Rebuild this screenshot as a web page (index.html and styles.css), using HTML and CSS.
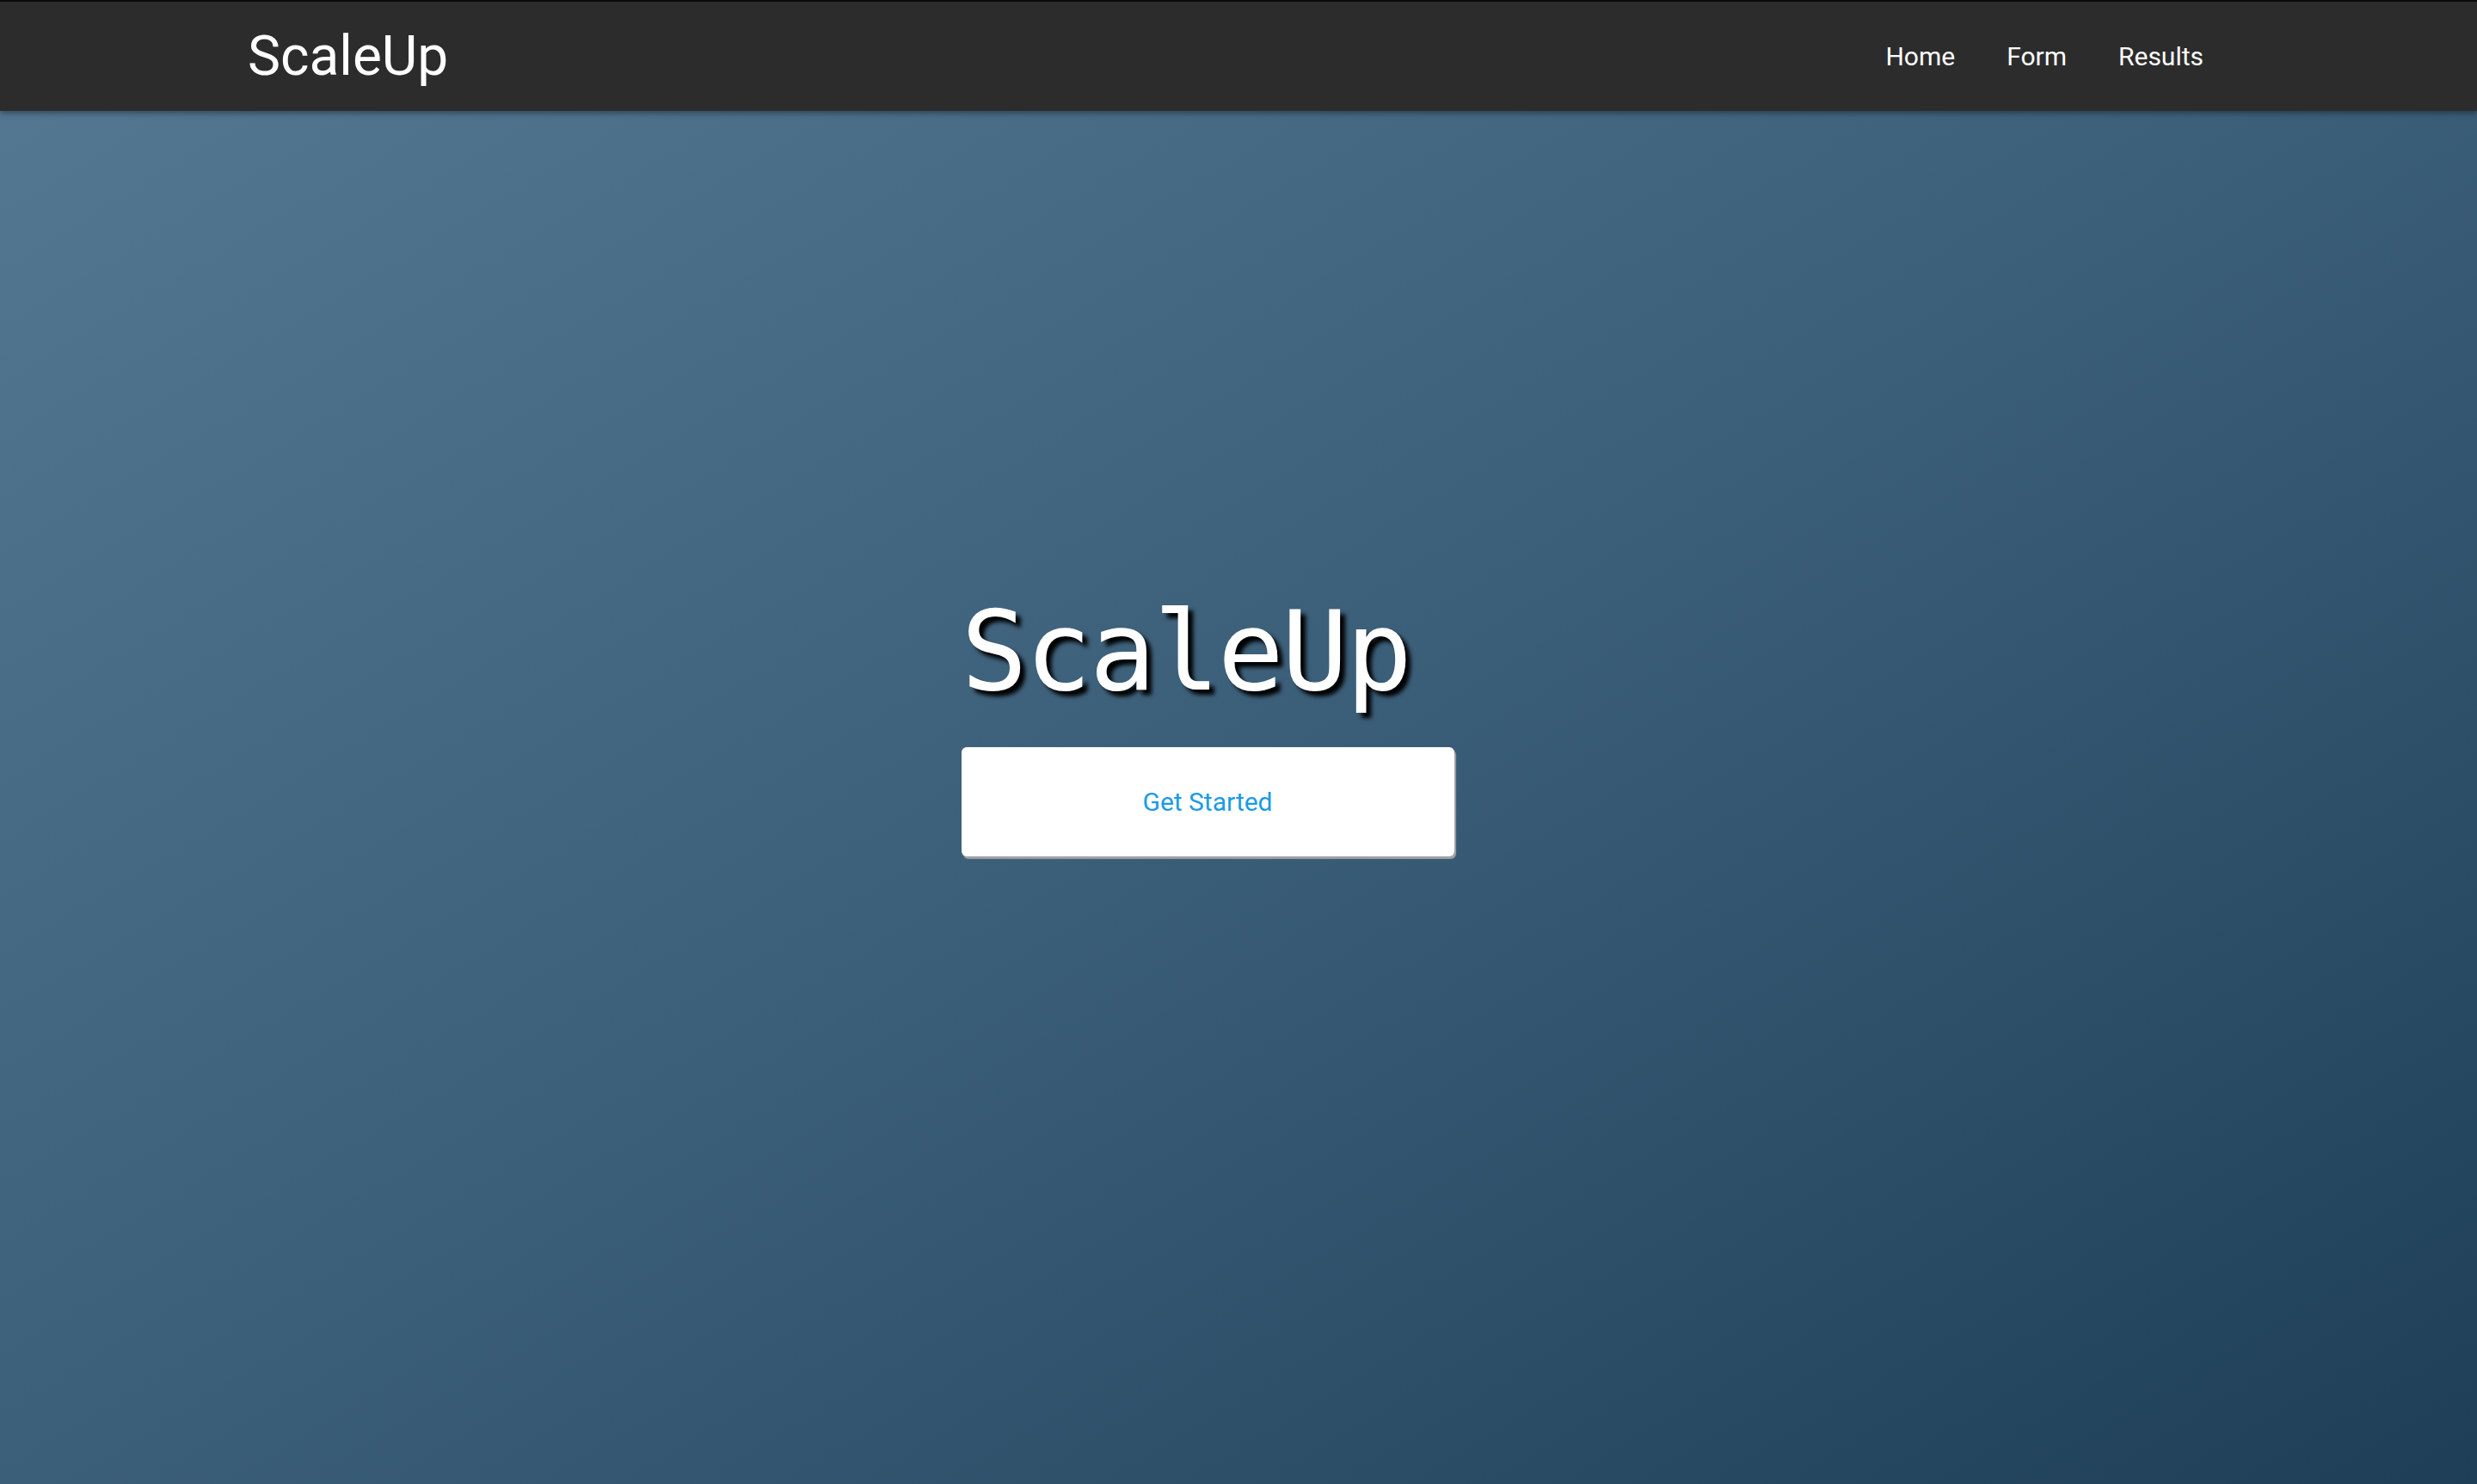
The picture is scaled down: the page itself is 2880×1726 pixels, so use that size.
FILE: index.html
```html
<!DOCTYPE html>
<html lang="en">
<head>
<meta charset="utf-8">
<title>ScaleUp</title>
<link rel="stylesheet" href="styles.css">
</head>
<body>
<header class="navbar">
  <div class="nav-inner">
    <a class="brand" href="#">ScaleUp</a>
    <nav class="nav-links">
      <a href="#">Home</a>
      <a href="#">Form</a>
      <a href="#">Results</a>
    </nav>
  </div>
</header>
<main class="hero">
  <div class="hero-content">
    <h1 class="hero-title">ScaleUp</h1>
    <button class="cta">Get Started</button>
  </div>
</main>
</body>
</html>
```
FILE: styles.css
```css
html, body {
  margin: 0;
  padding: 0;
  height: 100%;
}
body {
  font-family: Roboto, "Liberation Sans", sans-serif;
  background: linear-gradient(to bottom right, #557893 0%, #3c5f79 50%, #1d3e56 100%);
  min-height: 1726px;
  display: flex;
  flex-direction: column;
}
.navbar {
  background: #2c2c2c;
  border-top: 2px solid #0a0a0a;
  height: 127px;
  box-shadow: 0 3px 6px rgba(0, 0, 0, 0.35);
  position: relative;
  z-index: 1;
}
.nav-inner {
  width: 2304px;
  margin: 0 auto;
  height: 100%;
  display: flex;
  align-items: center;
  justify-content: space-between;
}
.brand {
  color: #fff;
  text-decoration: none;
  font-size: 64px;
  font-weight: 400;
}
.nav-links {
  display: flex;
}
.nav-links a {
  color: #fff;
  text-decoration: none;
  font-size: 30px;
  padding: 0 30px;
}
.hero {
  flex: 1;
  display: flex;
  justify-content: center;
  padding-top: 565px;
  padding-right: 72px;
}
.hero-content {
  display: flex;
  flex-direction: column;
  align-items: flex-start;
}
.hero-title {
  margin: 0 0 47px 0;
  font-family: "DejaVu Sans Mono", "Liberation Mono", monospace;
  font-weight: 400;
  font-size: 128px;
  letter-spacing: -2.5px;
  line-height: 1;
  color: #fff;
  text-shadow: 6px 6px 5px #000;
}
.cta {
  width: 573px;
  height: 127px;
  background: #fff;
  border: none;
  border-radius: 6px;
  box-shadow: 2px 3px 1px #a3a3a3;
  color: #1a9be6;
  font-family: Roboto, "Liberation Sans", sans-serif;
  font-size: 30px;
  cursor: pointer;
}
```
